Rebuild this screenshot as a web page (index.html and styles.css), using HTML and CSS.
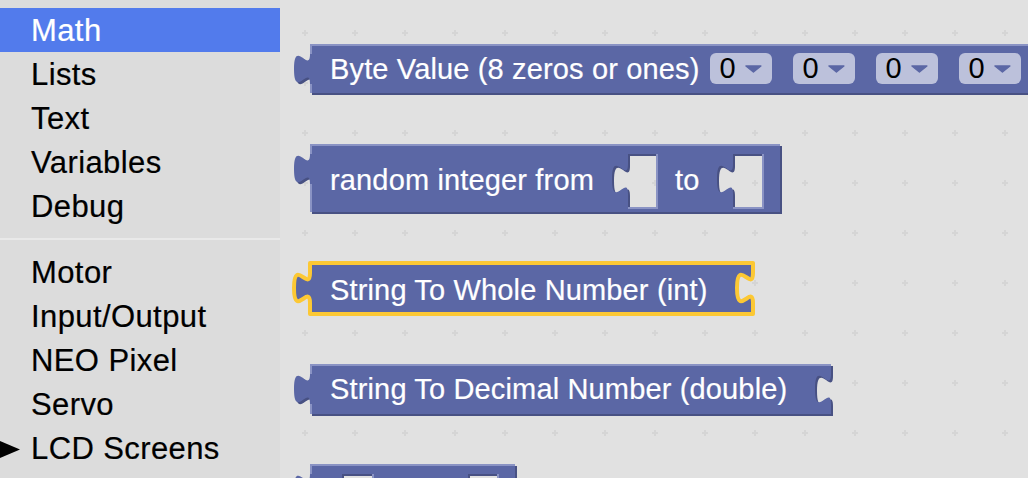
FILE: index.html
```html
<!DOCTYPE html>
<html lang="en">
<head>
<meta charset="utf-8">
<title>Blocks</title>
<link rel="stylesheet" href="styles.css">
</head>
<body>
<div class="app">
  <nav class="toolbox">
    <div class="cat selected">Math</div>
    <div class="cat">Lists</div>
    <div class="cat">Text</div>
    <div class="cat">Variables</div>
    <div class="cat">Debug</div>
    <div class="sep"></div>
    <div class="cat">Motor</div>
    <div class="cat">Input/Output</div>
    <div class="cat">NEO Pixel</div>
    <div class="cat">Servo</div>
    <div class="cat collapsed"><svg class="arrow" width="20" height="17" viewBox="0 0 20 17"><polygon points="0,0 20,8.5 0,17" fill="#000"/></svg>LCD Screens</div>
  </nav>

  <main class="workspace">
    <svg class="grid" width="100%" height="100%">
      <defs>
        <pattern id="dots" width="50" height="50" patternUnits="userSpaceOnUse">
          <rect x="22" y="32" width="6" height="2" fill="#d5d5d5"/>
          <rect x="24" y="30" width="2" height="6" fill="#d5d5d5"/>
        </pattern>
      </defs>
      <rect width="100%" height="100%" fill="url(#dots)"/>
    </svg>

    <!-- Byte value -->
    <div class="block b1">
      <svg class="shape" width="740" height="51">
        <path class="dark" transform="translate(2,2)" d="M16,0 H740 V49 H16 V40 c0,-20 -16,16 -16,-15 s16,5 16,-15 Z"/>
        <path class="main" d="M16,0 H740 V49 H16 V40 c0,-20 -16,16 -16,-15 s16,5 16,-15 Z"/>
        <path class="light" d="M16,1 H740 M17,0 V10 M17,40 V49"/>
      </svg>
      <div class="fields">
        <span class="label">Byte Value (8 zeros or ones)</span>
        <span class="dd first">0<svg class="dd-arrow" width="17" height="8" viewBox="0 0 17 8"><polygon points="1,1 16,1 8.5,7" /></svg></span>
        <span class="dd">0<svg class="dd-arrow" width="17" height="8" viewBox="0 0 17 8"><polygon points="1,1 16,1 8.5,7" /></svg></span>
        <span class="dd">0<svg class="dd-arrow" width="17" height="8" viewBox="0 0 17 8"><polygon points="1,1 16,1 8.5,7" /></svg></span>
        <span class="dd">0<svg class="dd-arrow" width="17" height="8" viewBox="0 0 17 8"><polygon points="1,1 16,1 8.5,7" /></svg></span>
      </div>
    </div>

    <!-- random integer -->
    <div class="block b2">
      <svg class="shape" width="490" height="72">
        <path class="dark" transform="translate(2,2)" fill-rule="evenodd" d="M16,0 H486 V68 H16 V40 c0,-20 -16,16 -16,-15 s16,5 16,-15 Z M334,10 H362 V63 H334 V50 c0,-20 -16,16 -16,-15 s16,5 16,-15 Z M439,10 H468 V63 H439 V50 c0,-20 -16,16 -16,-15 s16,5 16,-15 Z"/>
        <path class="main" fill-rule="evenodd" d="M16,0 H486 V68 H16 V40 c0,-20 -16,16 -16,-15 s16,5 16,-15 Z M334,10 H362 V63 H334 V50 c0,-20 -16,16 -16,-15 s16,5 16,-15 Z M439,10 H468 V63 H439 V50 c0,-20 -16,16 -16,-15 s16,5 16,-15 Z"/>
        <path class="light" d="M16,1 H486 M17,0 V10 M17,40 V68 M334,64 H363 V10 M439,64 H469 V10"/>
      </svg>
      <div class="fields">
        <span class="label">random integer from</span>
        <span class="socket s1"></span>
        <span class="label to">to</span>
        <span class="socket s2"></span>
      </div>
    </div>

    <!-- String to whole number (selected) -->
    <div class="block b3">
      <svg class="shape" width="462" height="58">
        <path class="main selected-outline" d="M16,3 H459 V13 c0,20 -16,-16 -16,15 s16,-5 16,15 V54 H16 V43 c0,-20 -16,16 -16,-15 s16,5 16,-15 Z"/>
      </svg>
      <div class="fields">
        <span class="label">String To Whole Number (int)</span>
      </div>
    </div>

    <!-- String to decimal number -->
    <div class="block b4">
      <svg class="shape" width="545" height="52">
        <path class="dark" transform="translate(2,2)" d="M16,0 H537 V10 c0,20 -16,-16 -16,15 s16,-5 16,15 V50 H16 V40 c0,-20 -16,16 -16,-15 s16,5 16,-15 Z"/>
        <path class="main" d="M16,0 H537 V10 c0,20 -16,-16 -16,15 s16,-5 16,15 V50 H16 V40 c0,-20 -16,16 -16,-15 s16,5 16,-15 Z"/>
        <path class="light" d="M16,1 H537 M17,0 V10 M17,40 V50"/>
      </svg>
      <div class="fields">
        <span class="label">String To Decimal Number (double)</span>
      </div>
    </div>

    <!-- partially visible block -->
    <div class="block b5">
      <svg class="shape" width="225" height="82">
        <path class="dark" transform="translate(2,2)" fill-rule="evenodd" d="M16,0 H221 V80 H16 V40 c0,-20 -16,16 -16,-15 s16,5 16,-15 Z M48,10 H78 V70 H48 V50 c0,-20 -16,16 -16,-15 s16,5 16,-15 Z M174,10 H203 V70 H174 V50 c0,-20 -16,16 -16,-15 s16,5 16,-15 Z"/>
        <path class="main" fill-rule="evenodd" d="M16,0 H221 V80 H16 V40 c0,-20 -16,16 -16,-15 s16,5 16,-15 Z M48,10 H78 V70 H48 V50 c0,-20 -16,16 -16,-15 s16,5 16,-15 Z M174,10 H203 V70 H174 V50 c0,-20 -16,16 -16,-15 s16,5 16,-15 Z"/>
        <path class="light" d="M16,1 H221 M17,0 V10 M79,10 V70 M204,10 V70"/>
      </svg>
    </div>
  </main>
</div>
</body>
</html>
```

FILE: styles.css
```css
html, body {
  margin: 0;
  padding: 0;
  height: 100%;
  overflow: hidden;
}

body {
  font-family: "Liberation Sans", Arial, Helvetica, sans-serif;
  background: #e1e1e1;
}

.app {
  display: flex;
  width: 1028px;
  height: 478px;
}

/* ---------- toolbox ---------- */
.toolbox {
  flex: none;
  width: 280px;
  background: #dcdcdc;
  padding-top: 8px;
  box-sizing: border-box;
}

.cat {
  height: 44px;
  line-height: 44px;
  padding-left: 31px;
  padding-top: 1px;
  box-sizing: border-box;
  font-size: 31px;
  letter-spacing: 0.4px;
  -webkit-text-stroke: 0.2px currentColor;
  color: #000;
  white-space: nowrap;
}

.cat.selected {
  background: #527bec;
  color: #fff;
}

.cat.collapsed {
  display: flex;
  align-items: center;
  padding-left: 0;
  padding-top: 2px;
}

.arrow {
  flex: none;
  margin-right: 11px;
}

.sep {
  height: 2px;
  background: #e9e9e9;
  margin: 10px 0;
}

/* ---------- workspace ---------- */
.workspace {
  position: relative;
  flex: 1;
  overflow: hidden;
  background: #e1e1e1;
}

.grid {
  position: absolute;
  left: 0;
  top: 0;
}

.block {
  position: absolute;
  left: 14px;
}

.shape {
  position: absolute;
  left: 0;
  top: 0;
  overflow: visible;
}

.shape .main { fill: #5b67a5; }
.shape .dark { fill: #485183; }
.shape .light {
  fill: none;
  stroke: #8a93c4;
  stroke-width: 2;
}
.shape .selected-outline {
  stroke: #fcc834;
  stroke-width: 4;
  stroke-linejoin: round;
}

.fields {
  position: relative;
  display: flex;
  align-items: center;
  padding-left: 36px;
  box-sizing: border-box;
  color: #fff;
  font-size: 29px;
  white-space: nowrap;
}

.label {
  line-height: 32px;
  letter-spacing: 0.15px;
  -webkit-text-stroke: 0.2px currentColor;
}

/* block 1 */
.b1 { top: 44px; width: 740px; }
.b1 .fields { height: 49px; }

.dd {
  display: flex;
  align-items: center;
  height: 31px;
  width: 62px;
  box-sizing: border-box;
  padding: 0 10px;
  margin-left: 21px;
  background: #bcc1db;
  border-radius: 6px;
  color: #000;
  line-height: 31px;
}
.dd.first { margin-left: 10px; }

.dd-arrow {
  margin-left: 9px;
  margin-top: 1px;
}
.dd-arrow polygon {
  fill: #5b67a5;
  stroke: #5b67a5;
  stroke-width: 1.5;
  stroke-linejoin: round;
}

/* block 2 */
.b2 { top: 144px; width: 490px; }
.b2 .fields { height: 68px; padding-top: 4px; }
.socket {
  flex: none;
  display: block;
  width: 44px;
  height: 53px;
}
.socket.s1 { margin-left: 18px; }
.socket.s2 { margin-left: 18px; }
.label.to { margin-left: 19px; }

/* block 3 */
.b3 { top: 260px; width: 462px; }
.b3 .fields { height: 57px; padding-top: 3px; }

/* block 4 */
.b4 { top: 364px; width: 545px; }
.b4 .fields { height: 50px; }

/* block 5 */
.b5 { top: 464px; width: 225px; height: 82px; }
```
